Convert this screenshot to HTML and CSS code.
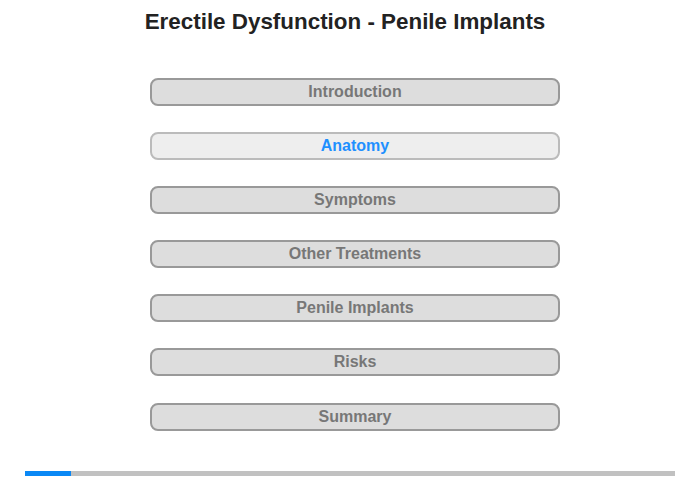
FILE: index.html
```html
<!DOCTYPE html>
<html lang="en">
<head>
    <meta charset="UTF-8">
    <meta name="viewport" content="width=device-width, initial-scale=1.0">
    <title>Erectile Dysfunction - Penile Implants</title>
    <link rel="stylesheet" href="styles.css">
</head>
<body>
    <div class="page">
        <h1 class="title">Erectile Dysfunction - Penile Implants</h1>
        <nav class="menu">
            <button class="menu-item">Introduction</button>
            <button class="menu-item active">Anatomy</button>
            <button class="menu-item">Symptoms</button>
            <button class="menu-item">Other Treatments</button>
            <button class="menu-item">Penile Implants</button>
            <button class="menu-item">Risks</button>
            <button class="menu-item">Summary</button>
        </nav>
        <div class="progress">
            <div class="progress-fill" style="width: 7%;"></div>
        </div>
    </div>
</body>
</html>
```

FILE: styles.css
```css
body {
    font-family: 'Liberation Sans', Arial, sans-serif;
    background-color: #fff;
    margin: 0;
    padding: 0;
}

.page {
    width: 700px;
    height: 480px;
    display: flex;
    flex-direction: column;
}

.title {
    margin: 9px 10px 0 0;
    font-size: 22.4px;
    line-height: 26px;
    font-weight: bold;
    text-align: center;
    color: #222;
}

.menu {
    display: flex;
    flex-direction: column;
    gap: 26.1px;
    margin: 43px 0 0 150px;
    width: 410px;
}

.menu-item {
    height: 28px;
    padding: 0;
    border: 2px solid #999;
    border-radius: 8px;
    background-color: #ddd;
    color: #777;
    font-family: inherit;
    font-size: 16px;
    font-weight: bold;
    text-align: center;
    cursor: pointer;
}

.menu-item.active {
    background-color: #eee;
    border-color: #bbb;
    color: #1e90ff;
}

.progress {
    margin: 40px 0 0 25px;
    width: 650px;
    height: 5px;
    background-color: #c1c1c1;
}

.progress-fill {
    height: 100%;
    background-color: #0a88f5;
}
```
